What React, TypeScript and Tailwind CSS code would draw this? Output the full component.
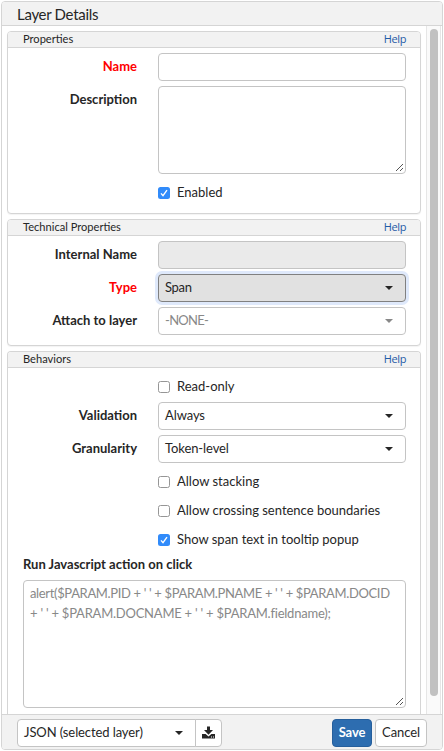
import type { ReactNode } from 'react';

function Caret({ muted = false }: { muted?: boolean }) {
  return (
    <svg className={`h-[4px] w-[8px] shrink-0 ${muted ? 'text-[#888]' : 'text-[#262626]'}`} viewBox="0 0 8 4">
      <path d="M0 0h8L4 4z" fill="currentColor" />
    </svg>
  );
}

function Grip() {
  return (
    <svg className="absolute right-px bottom-px h-[9px] w-[9px]" viewBox="0 0 9 9">
      <path d="M1 8L8 1M5 8L8 5" stroke="#555" strokeWidth="1" fill="none" />
    </svg>
  );
}

function Panel({ title, height, children, open = false }: { title: string; height: string; children: ReactNode; open?: boolean }) {
  return (
    <section className={`shrink-0 overflow-hidden border border-[#d5d5d5] bg-white ${open ? 'rounded-t-[4px] border-b-0' : 'rounded-[4px] shadow-[0_1px_1px_rgba(0,0,0,0.05)]'} ${height}`}>
      <header className="flex h-[16px] items-center justify-between border-b border-[#d5d5d5] bg-[#f2f2f2] pr-[14px] pb-[2px] pl-[15px] text-[11.1px] leading-[13px]">
        <span>{title}</span>
        <span className="font-['Open_Sans',sans-serif] text-[11px] tracking-[-0.4px] text-[#1f5ba6]">Help</span>
      </header>
      {children}
    </section>
  );
}

function Row({ label, required = false, children }: { label: string; required?: boolean; children: ReactNode }) {
  return (
    <div className="flex">
      <div className={`w-[129px] shrink-0 pt-[4px] text-right font-bold leading-[19px] ${required ? 'text-[#ff0000]' : ''}`}>{label}</div>
      <div className="ml-[21px] w-[248px]">{children}</div>
    </div>
  );
}

function Select({ value, kind = 'normal' }: { value: string; kind?: 'normal' | 'focus' | 'muted' }) {
  const look =
    kind === 'focus'
      ? 'border-[#808080] bg-[#e1e1e1] shadow-[0_0_0_3px_#dfe9fb]'
      : kind === 'muted'
        ? 'border-[#c4c4c4] bg-white text-[#888]'
        : 'border-[#c4c4c4] bg-white';
  return (
    <div className={`flex h-[28px] items-center justify-between rounded-[4px] border pr-[12px] pl-[6px] ${look}`}>
      <span className={`pb-[2px] ${kind === 'muted' ? 'tracking-[-0.7px]' : kind === 'focus' ? 'tracking-[-0.3px]' : 'tracking-[-0.1px]'}`}>{value}</span>
      <Caret muted={kind === 'muted'} />
    </div>
  );
}

function Check({ label, checked = false }: { label: string; checked?: boolean }) {
  return (
    <div className="ml-[150px] flex h-[18px] items-center">
      <span className={`flex h-[12px] w-[12px] shrink-0 items-center justify-center rounded-[2.5px] ${checked ? 'bg-[#318bfa]' : 'border border-[#969696] bg-white'}`}>
        {checked && (
          <svg className="h-[12px] w-[12px]" viewBox="0 0 12 12">
            <path d="M3 6.4L5 8.6L9 3.2" stroke="white" strokeWidth="1.4" fill="none" />
          </svg>
        )}
      </span>
      <span className="ml-[7px] pb-[2px]">{label}</span>
    </div>
  );
}

export default function App() {
  return (
    <div className="h-[751px] w-[444px] overflow-hidden bg-white pt-px pl-px font-['Lato',sans-serif] text-[13px] leading-[18px] whitespace-nowrap text-[#262626]">
      <div className="flex h-[749px] w-[442px] flex-col overflow-hidden rounded-[4px] border border-[#d5d5d5]">
        <header className="flex h-[24px] shrink-0 items-center border-b border-[#d5d5d5] bg-[#f2f2f2] pl-[15px] text-[15px] tracking-[-0.3px]">Layer Details</header>
        <div className="flex h-[688px] shrink-0">
          <main className="flex w-[424px] flex-col gap-[5px] overflow-hidden pt-[5px] pr-[5px] pl-[5px]">
            <Panel title="Properties" height="h-[183px]">
              <div className="flex flex-col gap-[5px] pt-[5px]">
                <Row label="Name" required>
                  <div className="h-[28px] rounded-[4px] border border-[#c4c4c4]" />
                </Row>
                <Row label="Description">
                  <div className="relative h-[88px] rounded-[4px] border border-[#c4c4c4]">
                    <Grip />
                  </div>
                </Row>
              </div>
              <div className="pt-[10px]">
                <Check label="Enabled" checked />
              </div>
            </Panel>
            <Panel title="Technical Properties" height="h-[127px]">
              <div className="flex flex-col gap-[5px] pt-[5px]">
                <Row label="Internal Name">
                  <div className="h-[28px] rounded-[4px] border border-[#c4c4c4] bg-[#eaeaea]" />
                </Row>
                <Row label="Type" required>
                  <Select value="Span" kind="focus" />
                </Row>
                <Row label="Attach to layer">
                  <Select value="-NONE-" kind="muted" />
                </Row>
              </div>
            </Panel>
            <Panel title="Behaviors" height="h-[363px]" open>
              <div className="pt-[10px]">
                <Check label="Read-only" />
              </div>
              <div className="flex flex-col gap-[5px] pt-[6px]">
                <Row label="Validation">
                  <Select value="Always" />
                </Row>
                <Row label="Granularity">
                  <Select value="Token-level" />
                </Row>
              </div>
              <div className="flex flex-col gap-[11px] pt-[10px]">
                <Check label="Allow stacking" />
                <Check label="Allow crossing sentence boundaries" />
                <Check label="Show span text in tooltip popup" checked />
              </div>
              <div className="pt-[6px] pl-[15px]">
                <div className="font-bold">Run Javascript action on click</div>
                <div className="relative mt-[7px] h-[128px] w-[383px] rounded-[4px] border border-[#c4c4c4] px-[6px] pt-[2px] leading-[20px] text-[#888]">
                  <div className="tracking-[-0.35px]">{"alert($PARAM.PID + ' ' + $PARAM.PNAME + ' ' + $PARAM.DOCID"}</div>
                  <div className="tracking-[-0.23px]">{"+ ' ' + $PARAM.DOCNAME + ' ' + $PARAM.fieldname);"}</div>
                  <Grip />
                </div>
              </div>
            </Panel>
          </main>
          <div className="w-[15px] border-x border-[#e6e6e6] bg-[#fafafa] pt-[3px] pl-[3px]">
            <div className="h-[667px] w-[8px] rounded-full bg-[#c1c1c1]" />
          </div>
        </div>
        <footer className="flex grow items-start border-t border-[#d5d5d5] bg-[#f2f2f2] pt-[4px] pr-[15px] pl-[15px]">
          <div className="flex h-[28px] w-[179px] items-center justify-between rounded-l-[4px] border border-[#c4c4c4] bg-white pr-[12px] pl-[6px]">
            <span className="pb-[2px] tracking-[-0.1px]">JSON (selected layer)</span>
            <Caret />
          </div>
          <div className="-ml-px flex h-[28px] w-[27px] items-center justify-center rounded-r-[4px] border border-[#c4c4c4] bg-white pb-[2px]">
            <svg className="h-[13px] w-[13px]" viewBox="0 0 13 13">
              <path d="M5 0.5h3V4h3L6.5 8.7L2 4h3z" fill="#262626" />
              <path fillRule="evenodd" d="M0 8h3.6L6.5 10.4L9.4 8H13v4.5H0zM9 10.5h1v1H9zM11 10.5h1v1h-1z" fill="#262626" />
            </svg>
          </div>
          <div className="ml-auto flex h-[28px] w-[40px] items-center justify-center rounded-[4px] border border-[#265f9c] bg-[#2d6db0] pb-[3px] font-bold tracking-[-0.1px] text-white">Save</div>
          <div className="ml-[3px] flex h-[28px] w-[52px] items-center justify-center rounded-[4px] border border-[#c4c4c4] bg-white pb-[3px] tracking-[-0.1px]">Cancel</div>
        </footer>
      </div>
    </div>
  );
}
